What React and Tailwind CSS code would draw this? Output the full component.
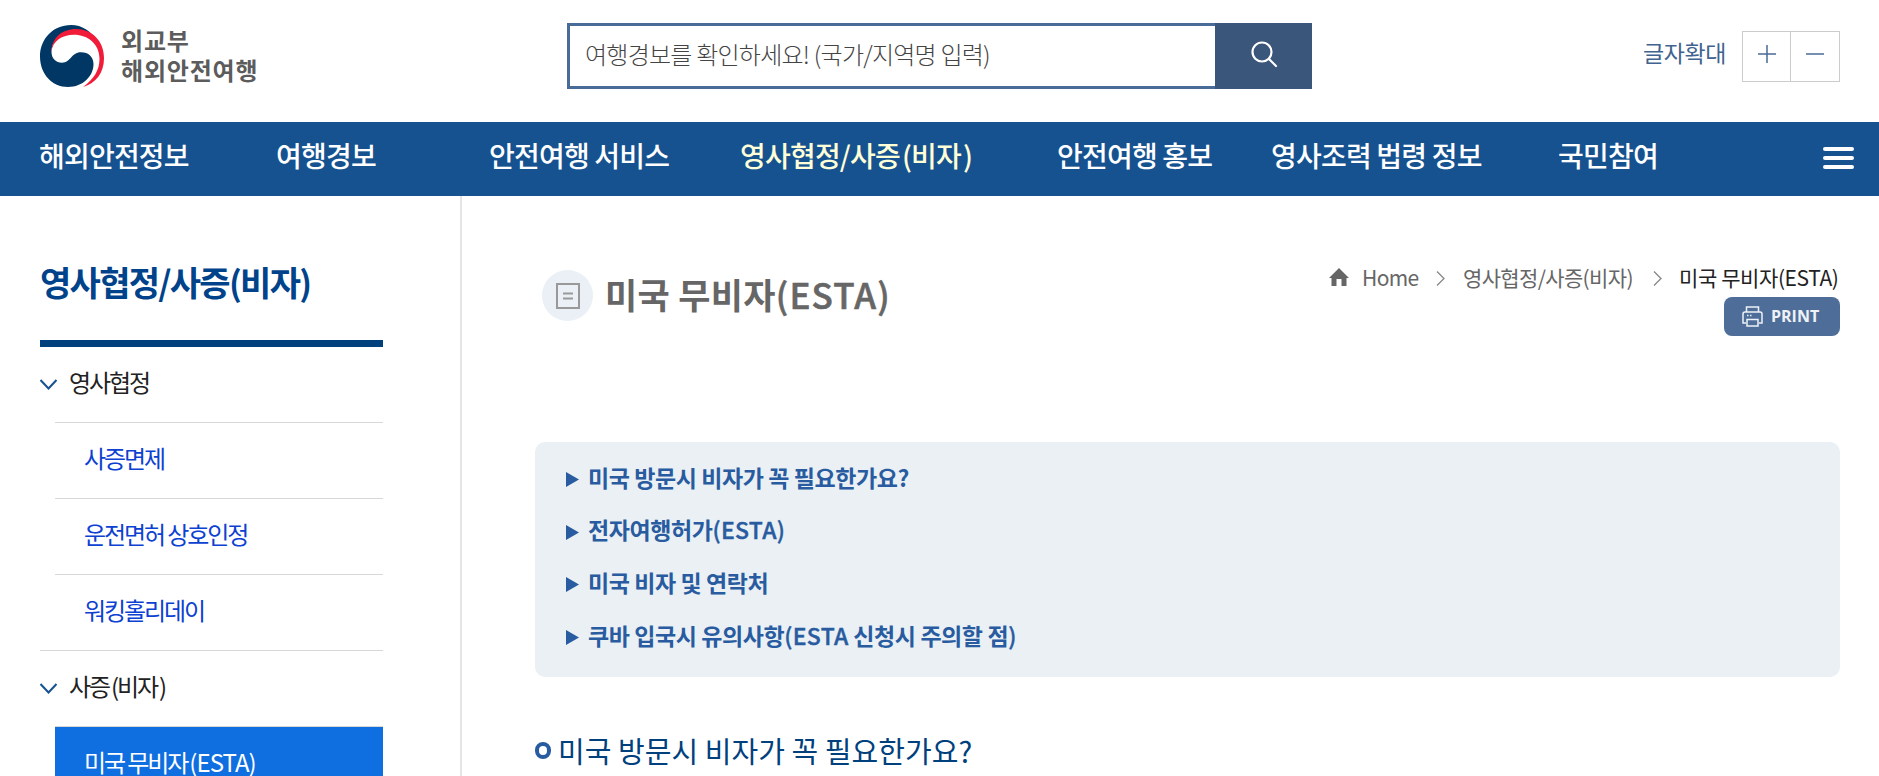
import React, { useState } from "react"

const menus = [
  { name: "해외안전정보", width: "w-[237px]" },
  { name: "여행경보", width: "w-[213px]" },
  { name: "안전여행 서비스", width: "w-[251px]" },
  { name: "영사협정/사증(비자)", width: "w-[317px]", active: true },
  { name: "안전여행 홍보", width: "w-[214px]" },
  { name: "영사조력 법령 정보", width: "w-[287px]" },
  { name: "국민참여", width: "w-[265px]" },
]

const sideMenus = [
  { name: "영사협정", items: ["사증면제", "운전면허 상호인정", "워킹홀리데이"] },
  { name: "사증(비자)", items: ["미국 무비자(ESTA)"] },
]

const links = [
  "미국 방문시 비자가 꼭 필요한가요?",
  "전자여행허가(ESTA)",
  "미국 비자 및 연락처",
  "쿠바 입국시 유의사항(ESTA 신청시 주의할 점)",
]

// latin letters and brackets get their own weight and spacing
const Mixed = ({ text, latin }) =>
  text.split(/([A-Z()]+)/).map((part, i) =>
    i % 2 ? <span key={i} className={latin}>{part}</span> : part
  )

const Logo = () => (
  <a href="#" className="flex w-[527px] items-start pt-[25px]">
    <svg width="65" height="62" viewBox="0 0 65 62">
      <path d="M31 0C13 0 0 14 0 31.500C0 49 12 62 28 62C43 62 53.500 51 53.500 39C53.500 32 48.500 27.300 41 27.300C31 27.300 31 37.700 22 37.700C16 37.700 11.500 33.500 11.500 27C11.500 15 22 6 34 6C45 6 52 10 57 16C51 6 42 0 31 0Z" fill="#003764" />
      <path d="M11.500 27C11.500 13 22 4 36 4C52 4 64 16 64 33C64 48 56 58 43 62C54 54 59.500 45 59.500 34C59.500 19 48 9.800 34 9.800C22 9.800 12.500 16 11.500 27Z" fill="#f01c39" />
    </svg>
    <div className="ml-4 text-[24px] font-bold leading-[30px] tracking-[0.8px] text-[#5c5c5c]">
      <div>외교부</div>
      <div>해외안전여행</div>
    </div>
  </a>
)

const Header = () => {
  const [keyword, setKeyword] = useState("")
  return (
    <header className="flex h-[122px] items-start pl-10 pr-[39px]">
      <Logo />
      <form className="mt-[23px] flex h-[66px] w-[745px]" onSubmit={(e) => e.preventDefault()}>
        <input
          value={keyword}
          onChange={(e) => setKeyword(e.target.value)}
          placeholder="여행경보를 확인하세요! (국가/지역명 입력)"
          className="h-[66px] w-[648px] border-[3px] border-r-0 border-[#486b97] bg-white pb-[6px] pl-[15px] text-[24px] font-light tracking-[-0.75px] text-[#333] outline-none placeholder:text-[#444]"
        />
        <button className="flex w-[97px] items-center justify-center bg-[#3b567b]" aria-label="검색">
          <svg width="28" height="28" viewBox="0 0 28 28" fill="none" stroke="#fff" strokeWidth="2.200" strokeLinecap="round" className="-mt-1">
            <circle cx="12" cy="12" r="9.500" />
            <path d="M19 19l7 7" />
          </svg>
        </button>
      </form>
      <div className="ml-auto flex pt-[31px]">
        <span className="mr-4 text-[23px] leading-[43px] tracking-[-0.4px] text-[#41638f]">글자확대</span>
        <button className="flex h-[51px] w-[49px] items-center justify-center border border-[#ccc]" aria-label="확대">
          <svg width="18" height="18" viewBox="0 0 18 18" stroke="#486b97" strokeWidth="1.500" className="-mt-1.5">
            <path d="M0 9h18M9 0v18" />
          </svg>
        </button>
        <button className="flex h-[51px] w-[49px] items-center justify-center border border-l-0 border-[#ccc]" aria-label="축소">
          <svg width="18" height="18" viewBox="0 0 18 18" stroke="#486b97" strokeWidth="1.500" className="-mt-1.5">
            <path d="M0 9h18" />
          </svg>
        </button>
      </div>
    </header>
  )
}

const Nav = () => (
  <nav className="flex h-[74px] bg-[#165290] pl-[39px]">
    {menus.map((menu) => (
      <a
        key={menu.name}
        href="#"
        className={`${menu.width} shrink-0 whitespace-nowrap text-[28px] font-medium leading-[66px] tracking-[-0.8px] ${menu.active ? "text-[#ffffd8]" : "text-white"}`}
      >
        <Mixed text={menu.name} latin="ml-[2px]" />
      </a>
    ))}
    <button className="mt-[25px] flex h-[22px] w-[31px] flex-col justify-between" aria-label="전체메뉴">
      <span className="h-1 w-full rounded-sm bg-white" />
      <span className="h-1 w-full rounded-sm bg-white" />
      <span className="h-1 w-full rounded-sm bg-white" />
    </button>
  </nav>
)

const Sidebar = () => (
  <aside className="w-[462px] shrink-0 border-r-2 border-[#e5e5e5] pl-10 pr-[77px]">
    <h2 className="h-36 pt-[58px] text-[34px] font-bold leading-[56px] tracking-[-1.7px] text-[#00438b]">
      영사협정/사증(비자)
    </h2>
    <div className="h-[7px] bg-[#00417d]" />
    {sideMenus.map((menu, i) => (
      <div key={menu.name} className={i > 0 ? "border-t border-[#d8d8d8]" : ""}>
        <a href="#" className="flex h-[75px] items-center text-[24px] tracking-[-2.1px] text-[#222]">
          <svg width="17" height="11" viewBox="0 0 17 11" fill="none" stroke="#165290" strokeWidth="2" className="mr-3">
            <path d="M0.500 1l8 8.500l8-8.500" />
          </svg>
          <span className="-mt-[6px]">
            <Mixed text={menu.name} latin="ml-[2px]" />
          </span>
        </a>
        <ul className="ml-[15px]">
          {menu.items.map((item) => (
            <li key={item} className="border-t border-[#d8d8d8]">
              <a
                href="#"
                className={`block h-[75px] pl-[29px] text-[24px] leading-[69px] tracking-[-2.1px] ${i > 0 ? "bg-[#0f6ee0] text-white" : "text-[#0c41d2]"}`}
              >
                <Mixed text={item} latin="ml-[2px] tracking-[-0.9px]" />
              </a>
            </li>
          ))}
        </ul>
      </div>
    ))}
  </aside>
)

const Arrow = () => (
  <svg width="9" height="15" viewBox="0 0 9 15" fill="none" stroke="#888" strokeWidth="1.300" className="mt-1">
    <path d="M1 0.500l7 7l-7 7" />
  </svg>
)

const Breadcrumb = () => (
  <div className="flex flex-col items-end pt-[63px]">
    <div className="mb-[3px] flex h-[35px] items-center whitespace-nowrap text-[21px] leading-[30px] tracking-[-0.65px] text-[#666]">
      <svg width="20" height="18" viewBox="0 0 20 18" fill="#666" className="mr-[13px]">
        <path d="M10 0L20 10H17.500V18H12.500V11H7.500V18H2.500V10H0Z" />
      </svg>
      <span className="mr-[19px] w-[55px]">Home</span>
      <Arrow />
      <span className="ml-[18px] mr-[20px] w-[170px]">영사협정/사증(비자)</span>
      <Arrow />
      <span className="ml-[17px] w-[161px] tracking-[-0.4px] text-[#222]">미국 무비자(ESTA)</span>
    </div>
    <button className="flex h-[39px] w-[116px] items-center rounded-lg bg-[#4e6e99] pl-[18px] text-[#eef2f7]">
      <svg width="21" height="21" viewBox="0 0 21 21" fill="none" stroke="currentColor" strokeWidth="1.500">
        <path d="M4.500 6V1h12v5M4 17H1V8q0-2 2-2h15q2 0 2 2v9h-3M5 13.500h11v6.500H5zM5 9.500h1.500M8 9.500h1.500" />
      </svg>
      <span className="ml-[8px] font-['Open_Sans'] text-[16px] font-bold leading-[39px]">PRINT</span>
    </button>
  </div>
)

const Content = () => (
  <main className="flex-1 pl-[73px] pr-[39px]">
    <div className="flex h-[246px] items-start justify-between">
      <div className="flex items-center pl-[7px] pt-[74px]">
        <div className="flex h-[51px] w-[51px] items-center justify-center rounded-full bg-[#eaf0f5]">
          <svg width="24" height="26" viewBox="0 0 24 26" fill="none" stroke="#999" strokeWidth="2">
            <path d="M1 1h22v24H1zM7 10.500h10M7 15.500h10" />
          </svg>
        </div>
        <h1 className="-mt-[4px] ml-3 text-[35px] font-bold leading-[50px] tracking-[0.3px] text-[#666]">
          <Mixed text="미국 무비자(ESTA)" latin="font-medium tracking-[1.2px] [-webkit-text-stroke:0.6px]" />
        </h1>
      </div>
      <Breadcrumb />
    </div>
    <ul className="h-[235px] rounded-[10px] bg-[#eaf0f4] pl-[31px] pt-[10px]">
      {links.map((link) => (
        <li key={link} className="flex h-[52.7px] items-center">
          <svg width="13" height="15" viewBox="0 0 13 15" fill="#285b9f" className="mr-[9px] mt-[2px]">
            <path d="M0 0L13 7.500L0 15Z" />
          </svg>
          <a href="#" className="-mt-[3px] text-[23px] font-bold tracking-[-0.42px] text-[#285b9f]">
            <Mixed text={link} latin="font-medium tracking-[0.3px] [-webkit-text-stroke:0.4px]" />
          </a>
        </li>
      ))}
    </ul>
    <h3 className="mt-[48px] flex items-center text-[29px] leading-[50px] tracking-[0.05px] text-[#00417d]">
      <span className="mr-[7px] mt-[1px] h-[17px] w-4 rounded-full border-4 border-[#285b9f]" />
      <span>미국 방문시 비자가 꼭 필요한가요?</span>
    </h3>
  </main>
)

export default function App() {
  return (
    <div className="h-[776px] w-[1879px] overflow-hidden bg-white font-['Noto_Sans_CJK_KR',sans-serif]">
      <Header />
      <Nav />
      <div className="flex h-[580px] overflow-hidden">
        <Sidebar />
        <Content />
      </div>
    </div>
  )
}
